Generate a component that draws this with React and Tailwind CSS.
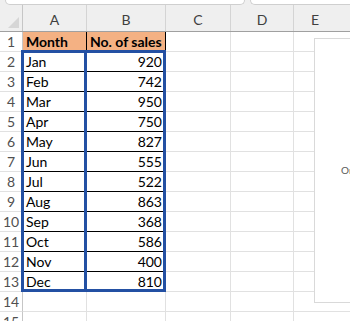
const rows = [
  ['Jan', 920],
  ['Feb', 742],
  ['Mar', 950],
  ['Apr', 750],
  ['May', 827],
  ['Jun', 555],
  ['Jul', 522],
  ['Aug', 863],
  ['Sep', 368],
  ['Oct', 586],
  ['Nov', 400],
  ['Dec', 810],
];

const RowHead = ({ n }) => (
  <div className="w-[23px] shrink-0 border-r border-b border-r-[#c6c6c6] border-b-[#e1e1e1] flex items-center justify-center text-[14px] text-[#505050]">
    {n}
  </div>
);

const EmptyCells = () => (
  <>
    <div className="w-[65px] shrink-0 border-r border-b border-[#e1e1e1]" />
    <div className="w-[63px] shrink-0 border-r border-b border-[#e1e1e1]" />
    <div className="flex-1 border-b border-[#e1e1e1]" />
  </>
);

export default function App() {
  return (
    <div className="relative w-[350px] h-[321px] overflow-hidden bg-white font-['Lato',sans-serif] text-black">
      {/* ribbon bottom edge */}
      <div className="flex h-[5px] bg-[#efefef]">
        <div className="w-[5px] shrink-0" />
        <div className="w-[240px] shrink-0 bg-white border border-t-0 border-[#cfcfcf] rounded-b-[6px]" />
        <div className="w-[5px] shrink-0" />
        <div className="flex-1 bg-white border border-t-0 border-r-0 border-[#cfcfcf] rounded-bl-[6px]" />
      </div>

      {/* column headers */}
      <div className="flex h-[27px] bg-[#efefef] border-b border-[#a0a0a0] text-[14px] text-[#3f3f3f]">
        <div className="relative w-[23px] shrink-0 border-r border-[#c6c6c6]">
          <svg className="absolute left-[8px] top-[12px]" width="11" height="11" viewBox="0 0 11 11">
            <path d="M11 0 L11 11 L0 11 Z" fill="#d6d6d6" />
          </svg>
        </div>
        <div className="w-[64px] shrink-0 border-r border-[#d4d4d4] flex items-center justify-center pt-[3px]">A</div>
        <div className="w-[79px] shrink-0 border-r border-[#d4d4d4] flex items-center justify-center pt-[3px]">B</div>
        <div className="w-[65px] shrink-0 border-r border-[#d4d4d4] flex items-center justify-center pt-[3px]">C</div>
        <div className="w-[63px] shrink-0 border-r border-[#d4d4d4] flex items-center justify-center pt-[3px]">D</div>
        <div className="flex-1 flex items-center justify-center pt-[3px] pr-[14px]">E</div>
      </div>

      {/* row 1 */}
      <div className="flex h-[20px] text-[14px]">
        <RowHead n={1} />
        <div className="w-[64px] shrink-0 bg-[#f4b183] border-r border-b border-black flex items-center pl-[3px] font-bold">
          Month
        </div>
        <div className="w-[79px] shrink-0 bg-[#f4b183] border-r border-b border-black flex items-center pl-[3px] font-bold whitespace-nowrap">
          No. of sales
        </div>
        <EmptyCells />
      </div>

      {rows.map(([m, v], i) => (
        <div key={m} className="flex h-[20px] text-[14px]">
          <RowHead n={i + 2} />
          <div className="w-[64px] shrink-0 border-r border-b border-black flex items-center pl-[3px]">{m}</div>
          <div className="w-[79px] shrink-0 border-r border-b border-black flex items-center justify-end pr-[3px]">{v}</div>
          <EmptyCells />
        </div>
      ))}

      {[14, 15].map((n) => (
        <div key={n} className="flex h-[20px] text-[14px]">
          <RowHead n={n} />
          <div className="w-[64px] shrink-0 border-r border-b border-[#e1e1e1]" />
          <div className="w-[79px] shrink-0 border-r border-b border-[#e1e1e1]" />
          <EmptyCells />
        </div>
      ))}

      {/* selection outlines */}
      <div className="absolute left-[21px] top-[50px] w-[66px] h-[242px] border-[3px] border-[#2350a3]" />
      <div className="absolute left-[84px] top-[50px] w-[82px] h-[242px] border-[3px] border-[#2350a3]" />

      {/* chart area */}
      <div className="absolute left-[314px] top-[38px] w-[60px] h-[265px] bg-white border border-[#d9d9d9] overflow-hidden">
        <div className="absolute left-[26px] top-[124px] text-[10px] text-[#595959] whitespace-nowrap">Orders</div>
      </div>
    </div>
  );
}
